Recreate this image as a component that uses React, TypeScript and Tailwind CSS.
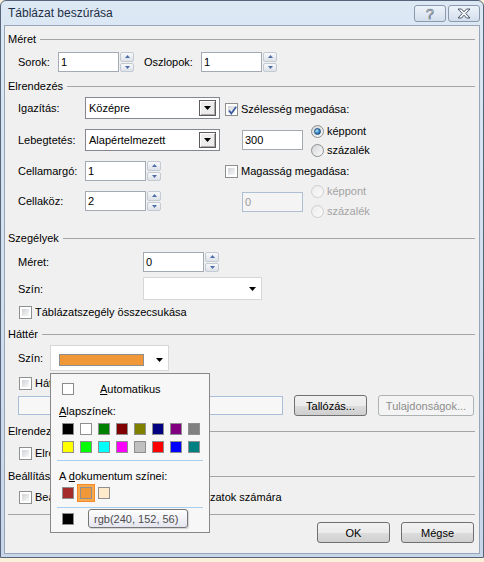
import React from 'react';

const Tri = ({ className = '' }: { className?: string }) => (
  <svg width="7" height="4" viewBox="0 0 7 4" className={className}>
    <path d="M0 0h7L3.5 4z" fill="currentColor" />
  </svg>
);

function Legend({ label, className = '' }: { label: string; className?: string }) {
  return (
    <div className={`flex h-[14px] items-center ${className}`}>
      <span>{label}</span>
      <div className="ml-[4px] h-px flex-1 bg-[#a5a5a5]" />
    </div>
  );
}

function TextBox({ value, w = 'w-[61px]', disabled = false }: { value: string; w?: string; disabled?: boolean }) {
  return (
    <div
      className={`flex h-[20px] items-center pl-[2px] ${w} ${
        disabled ? 'border border-[#aebfd4] bg-[#f4f4f4] text-[#9a9a9a]' : 'border border-[#a4aab3] bg-white'
      }`}
    >
      {value}
    </div>
  );
}

function Spinner() {
  const btn = 'flex flex-1 items-center justify-center rounded-[2px] border border-[#c4cad2] bg-gradient-to-b from-[#f8f9fb] to-[#dde2e9]';
  return (
    <div className="ml-[1px] flex h-[20px] w-[14px] flex-col gap-px">
      <div className={btn}>
        <svg width="5" height="3" viewBox="0 0 5 3">
          <path d="M0 3h5L2.5 0z" fill="#4f6ea8" />
        </svg>
      </div>
      <div className={btn}>
        <svg width="5" height="3" viewBox="0 0 5 3">
          <path d="M0 0h5L2.5 3z" fill="#4f6ea8" />
        </svg>
      </div>
    </div>
  );
}

function Checkbox({ checked = false }: { checked?: boolean }) {
  return (
    <div className="relative h-[13px] w-[13px] shrink-0 border border-[#8e8f8f] bg-white p-[2px]">
      <div className="h-full w-full bg-gradient-to-br from-[#cfd3d8] to-[#f8f8f8]" />
      {checked && (
        <svg className="absolute left-[1px] top-[1px]" width="11" height="11" viewBox="0 0 11 11">
          <path d="M2 5.5 L4.3 8.5 L9.2 1.8" fill="none" stroke="#3b5aa0" strokeWidth="1.8" />
        </svg>
      )}
    </div>
  );
}

function Radio({ checked = false, disabled = false }: { checked?: boolean; disabled?: boolean }) {
  return (
    <div
      className={`flex h-[13px] w-[13px] shrink-0 items-center justify-center rounded-full border ${
        disabled
          ? 'border-[#cfcfcf] bg-gradient-to-br from-[#ececec] to-[#fafafa]'
          : 'border-[#8e8f8f] bg-gradient-to-br from-[#d2d5d9] to-[#fbfbfb]'
      }`}
    >
      {checked && (
        <div className="h-[7px] w-[7px] rounded-full border border-[#1c4f7c] bg-[radial-gradient(circle_at_35%_35%,#b9e3fb,#2a7cc0_60%,#164a79)]" />
      )}
    </div>
  );
}

function CheckRow({ label, checked = false, className = '' }: { label: React.ReactNode; checked?: boolean; className?: string }) {
  return (
    <div className={`flex h-[14px] items-center whitespace-nowrap ${className}`}>
      <Checkbox checked={checked} />
      <span className="ml-[3px]">{label}</span>
    </div>
  );
}

function RadioRow({ label, checked = false, disabled = false, className = '' }: { label: string; checked?: boolean; disabled?: boolean; className?: string }) {
  return (
    <div className={`flex h-[16px] items-center ${disabled ? 'text-[#a3a3a3]' : ''} ${className}`}>
      <Radio checked={checked} disabled={disabled} />
      <span className="ml-[3px]">{label}</span>
    </div>
  );
}

function Select({ value }: { value: string }) {
  return (
    <div className="flex h-[22px] w-[135px] items-center border border-[#828790] bg-white pl-[3px]">
      <span>{value}</span>
      <div className="ml-auto mr-[3px] flex h-[16px] w-[17px] items-center justify-center border border-[#5c5c5c] bg-[#ececec] text-black shadow-[inset_1px_1px_0_#fff,inset_-1px_-1px_0_#a8a8a8]">
        <Tri />
      </div>
    </div>
  );
}

function Button({ label, w, disabled = false }: { label: string; w: string; disabled?: boolean }) {
  return (
    <div
      className={`flex h-[21px] items-center justify-center rounded-[3px] border ${w} ${
        disabled
          ? 'border-[#adb2b5] bg-[#f4f4f4] text-[#8d8d8d]'
          : 'border-[#707070] bg-[linear-gradient(#f2f2f2,#ebebeb_50%,#dddddd_50%,#cfcfcf)] text-black'
      }`}
    >
      {label}
    </div>
  );
}

const Swatch = ({ color }: { color: string }) => (
  <div className="h-[12px] w-[12px] border border-[#8f8f8f]" style={{ backgroundColor: color }} />
);

const basic1 = ['#000000', '#ffffff', '#008000', '#800000', '#808000', '#000080', '#800080', '#808080'];
const basic2 = ['#ffff00', '#00ff00', '#00ffff', '#ff00ff', '#c0c0c0', '#ff0000', '#0000ff', '#008080'];

function ColorPopup() {
  return (
    <div className="absolute left-[50px] top-[373px] h-[160px] w-[160px] border border-[#888888] bg-[#f7f7f7]">
      <div className="mt-[9px] flex h-[12px] items-center pl-[11px]">
        <div className="h-[12px] w-[12px] border border-[#8c8c8c] bg-white" />
        <span className="ml-[26px]">
          <u>A</u>utomatikus
        </span>
      </div>
      <div className="mt-[9px] flex h-[14px] items-center pl-[8px]">
        <span>
          <u>A</u>lapszínek:
        </span>
      </div>
      <div className="mt-[5px] flex gap-[6px] pl-[11px]">
        {basic1.map((c) => (
          <Swatch key={c} color={c} />
        ))}
      </div>
      <div className="mt-[6px] flex gap-[6px] pl-[11px]">
        {basic2.map((c) => (
          <Swatch key={c} color={c} />
        ))}
      </div>
      <div className="ml-[6px] mt-[7px] h-px w-[146px] bg-[#a9cdf1]" />
      <div className="mt-[8px] flex h-[14px] items-center pl-[8px]">
        <span>
          A <u>d</u>okumentum színei:
        </span>
      </div>
      <div className="mt-[1px] flex pl-[8px]">
        <div className="flex h-[18px] w-[18px] items-center justify-center">
          <Swatch color="#a52a2a" />
        </div>
        <div className="flex h-[18px] w-[18px] items-center justify-center border border-[#f4892a] bg-[#f8a94c]">
          <Swatch color="#f09838" />
        </div>
        <div className="flex h-[18px] w-[18px] items-center justify-center">
          <Swatch color="#ffeacb" />
        </div>
      </div>
      <div className="ml-[6px] mt-[5px] h-px w-[146px] bg-[#a9cdf1]" />
      <div className="mt-[2px] flex pl-[8px]">
        <div className="flex h-[18px] w-[18px] items-center justify-center">
          <Swatch color="#000000" />
        </div>
      </div>
      <div className="absolute left-[37px] top-[135px] flex h-[19px] w-[100px] items-center rounded-[3px] border border-[#767676] bg-gradient-to-b from-white to-[#e4e5f0] pl-[5px] text-[#4d4d4d] shadow-[1px_1px_1px_rgba(0,0,0,0.15)]">
        rgb(240, 152, 56)
      </div>
    </div>
  );
}

export default function App() {
  return (
    <div className="relative h-[562px] w-[484px] overflow-hidden bg-[#fbf1d9] text-[11px] leading-[14px] text-black [font-family:'Liberation_Sans',Arial,sans-serif]">
      <div className="flex h-[558px] w-[484px] flex-col rounded-t-[6px] border border-[#56657a] bg-gradient-to-b from-[#dde8f5] to-[#c7d6e9]">
        {/* title bar */}
        <div className="flex h-[24px] items-start pr-[3px]">
          <span className="ml-[7px] mt-[5px] text-[12px] text-[#1e2f45]">Táblázat beszúrása</span>
          <div className="ml-auto mt-[4px] flex gap-[2px]">
            <div className="flex h-[17px] w-[32px] items-center justify-center rounded-[3px] border border-[#8a99ad] bg-gradient-to-b from-[#eef3fa] to-[#d3deec]">
              <span className="text-[14px] leading-[14px] text-[#f4f6f9] [-webkit-text-stroke:0.6px_#4c5869]">?</span>
            </div>
            <div className="flex h-[17px] w-[32px] items-center justify-center rounded-[3px] border border-[#8a99ad] bg-gradient-to-b from-[#eef3fa] to-[#d3deec]">
              <svg width="14" height="11" viewBox="0 0 14 11">
                <path
                  d="M1 1h3.5L7 3.8 9.5 1H13L8.8 5.5 13 10H9.5L7 7.2 4.5 10H1l4.2-4.5z"
                  fill="#f4f6f9"
                  stroke="#4c5869"
                  strokeWidth="1"
                  strokeLinejoin="round"
                />
              </svg>
            </div>
          </div>
        </div>

        {/* body */}
        <div className="mx-[3px] mb-[3px] flex flex-1 flex-col border border-[#97a5b8] bg-[#f0f0f0] pl-[3px] pr-[4px]">
          <Legend label="Méret" className="mt-[6px]" />
          <div className="mt-[6px] flex h-[20px] items-center pl-[10px]">
            <span className="w-[40px]">Sorok:</span>
            <TextBox value="1" />
            <Spinner />
            <span className="ml-[10px] w-[57px]">Oszlopok:</span>
            <TextBox value="1" />
            <Spinner />
          </div>

          <Legend label="Elrendezés" className="mt-[7px]" />
          <div className="flex h-[138px] pl-[10px]">
            <div className="flex flex-col">
              <div className="mt-[4px] flex h-[22px] items-center">
                <span className="w-[67px]">Igazítás:</span>
                <Select value="Középre" />
              </div>
              <div className="mt-[10px] flex h-[22px] items-center">
                <span className="w-[67px]">Lebegtetés:</span>
                <Select value="Alapértelmezett" />
              </div>
              <div className="mt-[9px] flex h-[22px] items-center">
                <span className="w-[67px]">Cellamargó:</span>
                <TextBox value="1" />
                <Spinner />
              </div>
              <div className="mt-[8px] flex h-[22px] items-center">
                <span className="w-[67px]">Cellaköz:</span>
                <TextBox value="2" />
                <Spinner />
              </div>
            </div>
            <div className="ml-[5px] flex flex-col">
              <CheckRow label="Szélesség megadása:" checked className="mt-[9px]" />
              <div className="mt-[7px] flex pl-[17px]">
                <div className="mt-[7px]">
                  <TextBox value="300" />
                </div>
                <div className="ml-[8px] flex flex-col">
                  <RadioRow label="képpont" checked />
                  <RadioRow label="százalék" className="mt-[3px]" />
                </div>
              </div>
              <CheckRow label="Magasság megadása:" className="mt-[6px]" />
              <div className="mt-[5px] flex pl-[17px]">
                <div className="mt-[9px]">
                  <TextBox value="0" disabled />
                </div>
                <div className="ml-[8px] flex flex-col">
                  <RadioRow label="képpont" disabled />
                  <RadioRow label="százalék" disabled className="mt-[4px]" />
                </div>
              </div>
            </div>
          </div>

          <Legend label="Szegélyek" />
          <div className="mt-[7px] flex h-[20px] items-center pl-[10px]">
            <span className="w-[125px]">Méret:</span>
            <TextBox value="0" />
            <Spinner />
          </div>
          <div className="mt-[5px] flex h-[23px] items-center pl-[10px]">
            <span className="w-[125px]">Szín:</span>
            <div className="flex h-[23px] w-[119px] items-center justify-end border border-[#d7d7d7] bg-white pr-[5px]">
              <Tri />
            </div>
          </div>
          <CheckRow label="Táblázatszegély összecsukása" className="mt-[5px] pl-[11px]" />

          <Legend label="Háttér" className="mt-[8px]" />
          <div className="mt-[4px] flex h-[26px] items-center pl-[10px]">
            <span className="w-[32px]">Szín:</span>
            <div className="flex h-[26px] w-[119px] items-center border border-[#d7d7d7] bg-white pl-[8px] pr-[5px] pt-[3px]">
              <div className="h-[12px] w-[85px] border border-[#8f8f8f] bg-[#f09838]" />
              <Tri className="ml-auto" />
            </div>
          </div>
          <CheckRow label="Háttérkép" className="mt-[5px] pl-[11px]" />
          <div className="mt-[5px] flex h-[21px] items-center pl-[10px]">
            <div className="h-[19px] w-[265px] border border-[#a9bfd8] bg-[#f7f7f7]" />
            <div className="ml-[11px]">
              <Button label="Tallózás..." w="w-[73px]" />
            </div>
            <div className="ml-[11px]">
              <Button label="Tulajdonságok..." w="w-[96px]" disabled />
            </div>
          </div>

          <Legend label="Elrendezés" className="mt-[8px]" />
          <CheckRow label="Elrendezés táblázatként" className="mt-[8px] pl-[11px]" />

          <Legend label="Beállítás" className="mt-[9px]" />
          <CheckRow
            className="mt-[7px] pl-[11px]"
            label={
              <span className="flex">
                <span className="inline-block w-[175px]">Beállítás alapként az új tábla</span>
                <span>zatok számára</span>
              </span>
            }
          />

          <div className="mt-[10px] h-px bg-[#a5a5a5]" />
          <div className="mr-px mt-[7px] flex justify-end gap-[11px]">
            <Button label="OK" w="w-[73px]" />
            <Button label="Mégse" w="w-[73px]" />
          </div>
        </div>
      </div>
      <ColorPopup />
    </div>
  );
}
